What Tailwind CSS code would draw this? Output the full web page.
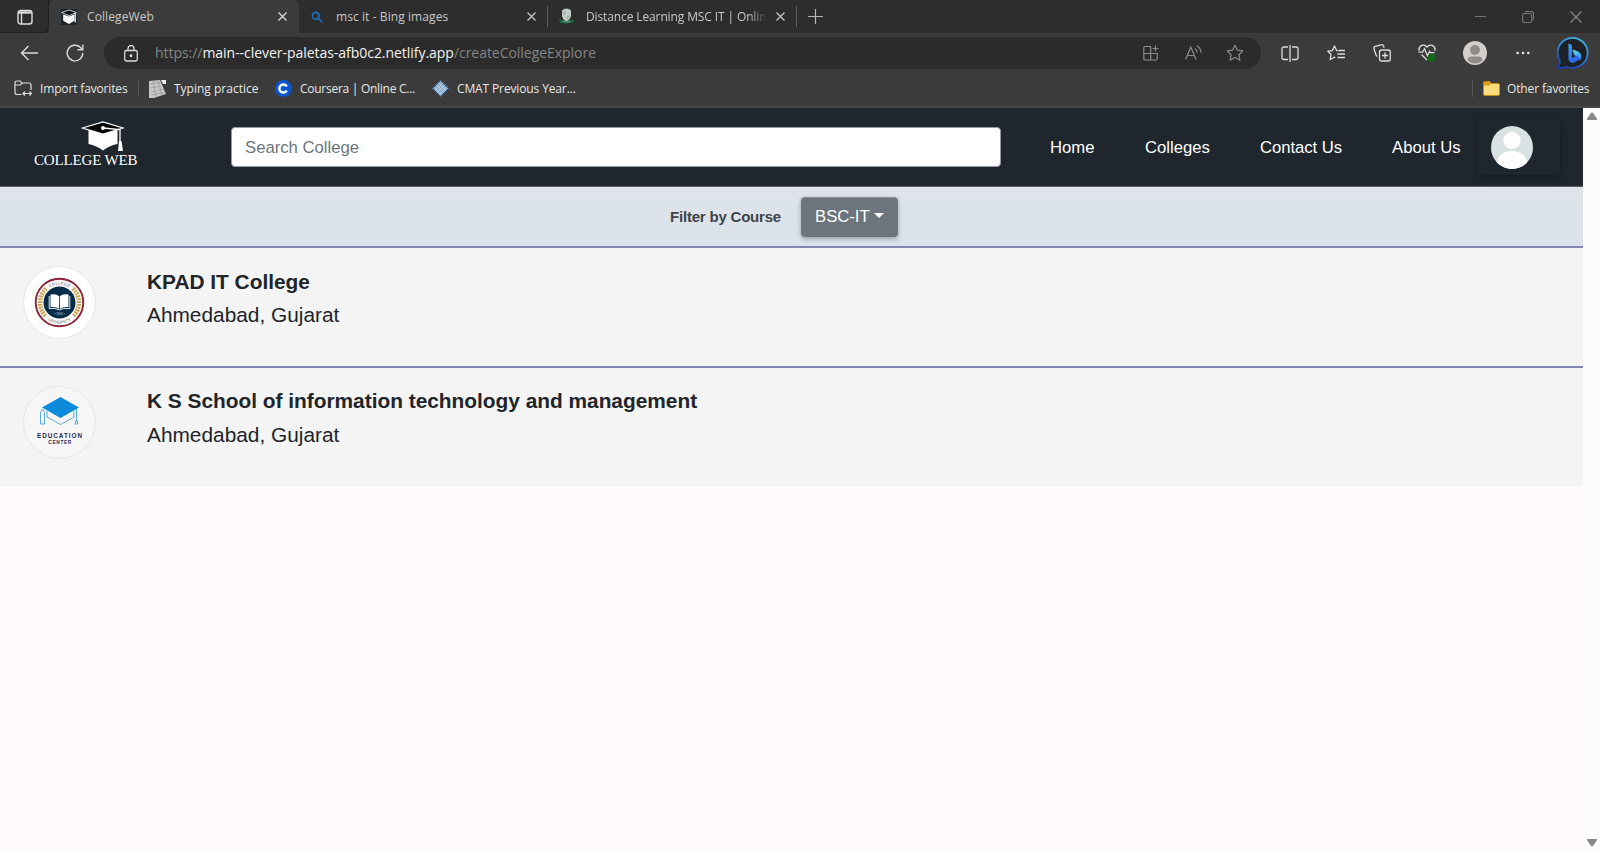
<!DOCTYPE html>
<html lang="en">
<head>
<meta charset="utf-8">
<title>CollegeWeb</title>
<script src="https://cdn.jsdelivr.net/npm/@tailwindcss/browser@4"></script>
</head>
<body class="h-[850px] w-[1600px] overflow-hidden bg-[#fffbfa] font-['Liberation_Sans',sans-serif]">
<div class="flex h-full flex-col">

  <!-- Browser chrome -->
  <header class="h-[108px] shrink-0 bg-[#3b3b3b] font-['Open_Sans',sans-serif] text-[#dedede]">
    <!-- Tab strip -->
    <div class="flex h-[33px] items-stretch bg-[#2d2d2d] text-[12px] leading-[33px] text-[#c8c8c8]">
      <div class="flex w-[49px] items-center rounded-br-md pl-[17px] shadow-[inset_-1px_-1px_1px_#202020]">
        <svg class="size-4" viewBox="0 0 16 16" fill="none" stroke="#dcdcdc" stroke-width="1.4"><rect x="1" y="1.500" width="14" height="13.500" rx="2.5"/><path d="M1.500 3.500h13" stroke-width="2.4"/><path d="M4.500 4v11"/></svg>
      </div>
      <div class="flex w-[250px] items-center rounded-t-md bg-[#3b3b3b] pl-3">
        <svg class="size-4" viewBox="0 0 16 16"><rect width="16" height="16" fill="#1d252c"/><path d="M2.2 5.5v6.2L8 15l5.4-3.3V5.500L8 7.500z" fill="#fff"/><path d="M.5 3.500 8 1l7.500 2.500L8 6.600z" fill="#111" stroke="#eee" stroke-width=".8"/><path d="M14.200 4v9.500" stroke="#fff" stroke-width="1.200"/></svg>
        <span class="ml-[10px] tracking-[0.1px] whitespace-nowrap">CollegeWeb</span>
        <svg class="mr-[12px] ml-auto size-[9px]" viewBox="0 0 9 9" stroke="#dcdcdc" stroke-width="1.200"><path d="M.5.500l8 8M8.500.500l-8 8"/></svg>
      </div>
      <div class="flex w-[248px] items-center pl-3">
        <svg class="size-3" viewBox="0 0 12 12" fill="none" stroke="#1a6fbd" stroke-width="1.700"><circle cx="4.800" cy="4.800" r="3.400"/><path d="M7.300 7.300l4 4"/></svg>
        <span class="ml-[13px] tracking-[0.08px] whitespace-nowrap">msc it - Bing images</span>
        <svg class="mr-[11px] ml-auto size-[9px]" viewBox="0 0 9 9" stroke="#c8c8c8" stroke-width="1.200"><path d="M.5.500l8 8M8.500.500l-8 8"/></svg>
      </div>
      <div class="my-[6px] w-px bg-[#5e5e5e]"></div>
      <div class="flex w-[248px] items-center pl-[10px]">
        <svg class="size-[17px]" viewBox="0 0 17 17"><path d="M4 2.500q4.500-4 9 0v5.500q-1 4-4.500 5.500Q5 12 4 8z" fill="#c3cdc7"/><path d="M5.500 4q1-1 2-1.200v4H5.200zM9 7.500h3Q11.500 11 9 12z" fill="#9db3a8"/><path d="M.8 11.200l3.400.800q4.300 2 8.600 0l3.400-.8-1.200 3.300-3 .5q-3.500 1.200-7 0l-3-.5z" fill="#176642"/><path d="M4.500 13.300q4 1.300 8 0" stroke="#9cbcac" stroke-width=".7" fill="none"/></svg>
        <span class="ml-[11px] w-[181px] overflow-hidden mask-r-from-[#000] mask-r-from-90% tracking-[-0.12px] whitespace-nowrap">Distance Learning MSC IT | Onlin</span>
        <svg class="ml-[9px] size-[9px]" viewBox="0 0 9 9" stroke="#c8c8c8" stroke-width="1.200"><path d="M.5.500l8 8M8.500.500l-8 8"/></svg>
      </div>
      <div class="my-[6px] w-px bg-[#5e5e5e]"></div>
      <svg class="mt-[9px] ml-[11px] size-[15px]" viewBox="0 0 15 15" stroke="#b8b8b8" stroke-width="1.200"><path d="M0 7.500h15M7.500 0v15"/></svg>
      <div class="mr-[18px] ml-auto flex items-center">
        <svg class="h-3 w-[11px]" viewBox="0 0 11 12" stroke="#777"><path d="M0 5.500h11"/></svg>
        <svg class="ml-9 size-3" viewBox="0 0 12 12" fill="none" stroke="#777" stroke-width="1.100"><rect x=".6" y="2.500" width="9" height="9" rx="1.500"/><path d="M3 1q.5-.5 1.500-.5h5q2 0 2 2v5q0 1-.8 1.600"/></svg>
        <svg class="ml-9 size-3" viewBox="0 0 12 12" stroke="#888" stroke-width="1.100"><path d="M.5.500l11 11M11.500.500l-11 11"/></svg>
      </div>
    </div>

    <!-- Address bar -->
    <div class="flex h-[40px] items-center">
      <svg class="ml-[20px] h-4 w-[18px]" viewBox="0 0 18 16" fill="none" stroke="#dcdcdc" stroke-width="1.400"><path d="M8.500 1L1.500 8l7 7M1.500 8H18"/></svg>
      <svg class="ml-[28px] size-[18px]" viewBox="0 0 18 18" fill="none" stroke="#dcdcdc" stroke-width="1.400"><path d="M16.800 9A7.800 7.800 0 1 1 14.500 3.500L16.500 5.500M16.800.500v5.300h-5.300"/></svg>
      <div class="ml-[20px] flex h-[32px] w-[1157px] items-center rounded-full bg-[#2b2b2b]">
        <svg class="ml-[20px] h-[17px] w-[14px]" viewBox="0 0 14 17" fill="none" stroke="#dcdcdc" stroke-width="1.300"><rect x=".7" y="5.500" width="12.600" height="10.500" rx="1.800"/><path d="M4 5.500V3.500a3 3 0 0 1 6 0v2"/><circle cx="7" cy="10.700" r=".8" fill="#dcdcdc"/></svg>
        <div class="ml-[17px] pb-px text-[14px] tracking-[-0.04px] whitespace-nowrap text-[#858585]"><span>https://</span><span class="text-[#f4f4f4]">main--clever-paletas-afb0c2.netlify.app</span><span>/createCollegeExplore</span></div>
        <svg class="ml-auto size-4" viewBox="0 0 16 16" fill="none" stroke="#8b8b8b" stroke-width="1.200"><path d="M8 1.500H2q-1.200 0-1.200 1.200v11.100Q.8 15 2 15h11q1.200 0 1.200-1.200V8.500H.8M7.700 1.500V15M12.500.500v6M9.500 3.500h6"/></svg>
        <svg class="ml-[26px] h-[16px] w-[17px]" viewBox="0 0 17 16" fill="none" stroke="#8b8b8b" stroke-width="1.200"><path d="M.6 14.500L5.800 2l5.200 12.500M2.400 10.500h6.800M10 3.500q2 1.500 2 4M12 .8q3.800 2.500 4 7"/></svg>
        <svg class="mr-[17px] ml-[24px] size-[18px]" viewBox="0 0 18 18" fill="none" stroke="#8b8b8b" stroke-width="1.200" stroke-linejoin="round"><path d="M9 1.200l2.400 5 5.500.7-4 3.800 1 5.500L9 13.500l-4.900 2.700 1-5.500-4-3.800 5.500-.7z"/></svg>
      </div>
      <svg class="ml-[20px] h-[17px] w-[18px]" viewBox="0 0 18 17" fill="none" stroke="#dcdcdc" stroke-width="1.300"><path d="M7 2H3Q1 2 1 4v8.500q0 2 2 2h4M11 2h4q2 0 2 2v8.500q0 2-2 2h-4M9 0v17"/></svg>
      <svg class="ml-[28px] h-[17px] w-[18px]" viewBox="0 0 18 17" fill="none" stroke="#dcdcdc" stroke-width="1.300" stroke-linejoin="round"><path d="M11 5.800l-1.400-.2L7.500 1 5.300 5.600.8 6.200l3.300 3.300-.9 5 4.300-2.300.8.300M11.500 5.500H18M10.500 9H18M10.500 12.500H18"/></svg>
      <svg class="ml-[28px] size-[18px]" viewBox="0 0 18 18" fill="none" stroke="#dcdcdc" stroke-width="1.300"><rect x="6.500" y="6" width="10.800" height="11" rx="2.200"/><path d="M12 8.500v6M9 11.500h6M4.300 12.500Q3.300 12 2.900 10.500L1 4.800Q.5 3 2.200 2.400L8 .8q2-.5 2.600 1.400l.5 1.600"/></svg>
      <svg class="ml-[27px] size-[18px]" viewBox="0 0 18 18" fill="none" stroke="#dcdcdc" stroke-width="1.300"><path d="M1 6.800C.5 1 6-.500 9 3c3-3.500 8.500-2 8 3.800M3.500 10.500L9 16M.5 8.200h4l2-3.500 3 7 2-4.200 1 1.200h4"/><circle cx="13.800" cy="13.800" r="4" fill="#13691a" stroke="none"/></svg>
      <svg class="ml-[27px] size-[24px]" viewBox="0 0 24 24"><circle cx="12" cy="12" r="12" fill="#d3cfcc"/><circle cx="12" cy="9" r="5" fill="#918c88"/><path d="M4.500 19Q5 15.500 8 15.500h8q3 0 3.500 3.500-3 3.500-7.500 3.500T4.500 19z" fill="#918c88"/></svg>
      <svg class="ml-[29px] h-1 w-[14px]" viewBox="0 0 14 4" fill="#e8e8e8"><circle cx="1.700" cy="2" r="1.300"/><circle cx="7" cy="2" r="1.300"/><circle cx="12.300" cy="2" r="1.300"/></svg>
      <svg class="ml-[27px] h-[34px] w-[33px]" viewBox="0 0 33 34"><defs><linearGradient id="ring" x1=".7" y1="0" x2=".3" y2="1"><stop stop-color="#3fb4de"/><stop offset=".5" stop-color="#2c7fdd"/><stop offset="1" stop-color="#1b3ba8"/></linearGradient><linearGradient id="bee" x1="0" y1="0" x2="1" y2="1"><stop stop-color="#3fa9f5"/><stop offset=".5" stop-color="#2a6fee"/><stop offset="1" stop-color="#2b62e0"/></linearGradient><linearGradient id="bowl" x1="0" y1="0" x2="0" y2="1"><stop stop-color="#5fe3ee"/><stop offset="1" stop-color="#2a6fee"/></linearGradient></defs><path d="M1.200 32.500L3 25A15 15 0 1 1 10.500 31z" fill="#1e2227" stroke="url(#ring)" stroke-width="1.800" stroke-linejoin="round"/><path d="M15.500 13.500Q22 15 24 18.500q1 4-1.500 6L20 20.500l-3-1.500z" fill="url(#bowl)"/><path d="M11.500 7.500q3.500.8 3.500 3V22l5-2.500 3 3.500-5.500 3.500q-2 1-4-.5-2-1.200-2-3z" fill="url(#bee)"/></svg>
    </div>

    <!-- Favorites bar -->
    <div class="flex h-[32px] items-center pb-px text-[12px] text-[#e8e8e8]">
      <svg class="ml-[14px] h-[17px] w-[18px]" viewBox="0 0 18 17" fill="none" stroke="#dcdcdc" stroke-width="1.200"><path d="M7.500 14.500H3Q1 14.500 1 12.500V3Q1 1 3 1h3l2 2h7q2 0 2 2v5M1 5h5.500L8.500 3M9 13.500h8.500M11 11.500l-2 2 2 2M15.500 11.500l2 2-2 2"/></svg>
      <span class="ml-[8px] w-[87px] tracking-[-0.15px] whitespace-nowrap">Import favorites</span>
      <div class="ml-[11px] h-4 w-px bg-[#585858]"></div>
      <svg class="ml-[10px] h-[18px] w-[17px]" viewBox="0 0 17 18"><path d="M0 1l11-1 6 14-12 4H0z" fill="#c7c7c7"/><path d="M12 0h5v4h-3z" fill="#ececec"/><path d="M1 4l10-1.500M1 8l12-2M2 12l13-3M3 15l13-3M4 1l3 16M9 1l4 14" stroke="#858585" stroke-width=".5"/></svg>
      <span class="ml-[8px] w-[84px] whitespace-nowrap">Typing practice</span>
      <svg class="ml-[17px] size-[17px]" viewBox="0 0 17 17"><circle cx="8.500" cy="8.500" r="8.500" fill="#0b55d0"/><path d="M11.800 6.400A4 4 0 1 0 11.800 10.600" fill="none" stroke="#fff" stroke-width="2.400"/></svg>
      <span class="ml-[8px] w-[116px] tracking-[-0.27px] whitespace-nowrap">Coursera | Online C...</span>
      <svg class="ml-[16px] size-[17px]" viewBox="0 0 17 17"><path d="M8.500 0L17 8.500 8.500 17 0 8.500z" fill="#86a9ca"/><path d="M6 2.500l8.500 8.500M4 4.500l8.500 8.500M2 6.500l8.500 8.500M11 2.500L2.500 11M13 4.500L4.500 13M15 6.500L6.500 15" stroke="#cfdae4" stroke-width=".8"/><path d="M8.500.500L16.500 8.500 8.500 16.500.500 8.500z" fill="none" stroke="#2b5580" stroke-width="1"/></svg>
      <span class="ml-[8px] tracking-[-0.13px] whitespace-nowrap">CMAT Previous Year...</span>
      <div class="ml-auto h-4 w-px bg-[#585858]"></div>
      <svg class="ml-[10px] h-[15px] w-[17px]" viewBox="0 0 17 15"><path d="M.5 13V2Q.5.500 2 .5h4.500l2 2H15q1.500 0 1.500 1.500v9q0 1.500-1.500 1.500H2Q.5 14.500.500 13z" fill="#fddc7b" stroke="#c18f12"/><path d="M1 4.500V1h5.500l1.500 1.500-1.500 2z" fill="#d7a01b"/></svg>
      <span class="mr-[10px] ml-[7px] w-[83px] tracking-[-0.13px] whitespace-nowrap">Other favorites</span>
    </div>
    <div class="mt-px h-[2px] bg-[#44474b]"></div>
  </header>

  <!-- Viewport -->
  <div class="flex min-h-0 flex-1">
    <main class="w-[1583px] text-[#212529]">
      <nav class="flex h-[79px] items-center border-b border-b-[#5a5e65] bg-[#20262e] text-[16.700px] text-white">
        <div class="ml-[34px] w-[104px] shrink-0 pb-[4px]">
          <svg class="ml-[47px] h-[31px] w-[44px]" viewBox="0 0 44 31"><path d="M7.500 9v14q8 1.500 14.500 6.500Q28 24.500 36.500 23V9L22 13z" fill="#fff"/><path d="M1.500 7L22 1l20 6-20 6z" fill="#050505" stroke="#fff" stroke-width="1.300"/><circle cx="22" cy="7" r="2" fill="#fff"/><path d="M22 7l17 1.500V22" fill="none" stroke="#fff" stroke-width="1.300"/><path d="M38 20h2.500l1.500 10h-5z" fill="#fff"/></svg>
          <div class="h-[17px] font-['Liberation_Serif',serif] text-[15px] leading-[17px] tracking-[-0.16px] whitespace-nowrap">COLLEGE WEB</div>
        </div>
        <div class="ml-[93px] flex h-[40px] w-[770px] shrink-0 items-center rounded-[4px] border border-[#929b9e] bg-white pt-px pl-[13px] text-[#6c757d]">Search College</div>
        <a class="ml-[49px] w-[45px] pt-px whitespace-nowrap">Home</a>
        <a class="ml-[50px] w-[65px] pt-px whitespace-nowrap">Colleges</a>
        <a class="ml-[50px] w-[83px] pt-px tracking-[-0.06px] whitespace-nowrap">Contact Us</a>
        <a class="ml-[49px] w-[69px] pt-px whitespace-nowrap">About Us</a>
        <div class="mr-[23px] ml-auto flex h-[56px] w-[82px] items-center rounded-[4px] bg-[#20262e] pl-[13px] shadow-[0_2px_7px_rgba(0,0,0,0.3)]">
          <svg class="h-[43px] w-[42px]" viewBox="0 0 42 43"><defs><clipPath id="face"><ellipse cx="21" cy="21.500" rx="21" ry="21.500"/></clipPath></defs><g clip-path="url(#face)"><rect width="42" height="43" fill="#dae1e2"/><ellipse cx="21" cy="14.500" rx="8.700" ry="8.500" fill="#fff"/><path d="M5 38q3-13 16-13t16 13l-8 7H13z" fill="#fff"/></g></svg>
        </div>
      </nav>

      <section class="flex h-[59px] items-center bg-linear-to-b from-[#dfe4eb] to-[#dbe2e9]">
        <span class="ml-[670px] w-[111px] pt-px text-[15px] font-bold tracking-[-0.2px] whitespace-nowrap text-[#40444a]">Filter by Course</span>
        <button class="ml-[20px] flex h-[40px] w-[97px] items-center rounded-[4px] border-t border-[#8b9197] bg-[#6c757d] pl-[14px] text-[16.700px] text-white shadow-[0_2px_5px_rgba(0,0,0,0.3)]">
          <span class="w-[54px] whitespace-nowrap">BSC-IT</span>
          <svg class="mb-[3px] ml-[5px] h-[5px] w-[10px]" viewBox="0 0 10 5" fill="#fff"><path d="M0 0h10L5 5z"/></svg>
        </button>
      </section>

      <article class="flex h-[120px] border-t-2 border-[#8585b5] bg-[#f4f4f4] pl-[23px]">
        <svg class="mt-[18px] size-[73px]" viewBox="0 0 73 73"><defs><path id="top" d="M18.500 36.500a18 18 0 0 1 36 0"/><path id="bottom" d="M15.500 36.500a21 21 0 0 0 42 0"/></defs><circle cx="36.500" cy="36.500" r="36" fill="#fff" stroke="#e3e6e8"/><g><circle cx="36.500" cy="36.500" r="23.800" fill="#fff" stroke="#8c2338" stroke-width="1.900"/><path d="M23 22.500a19.500 19.500 0 0 0 0 28M50 22.500a19.500 19.500 0 0 1 0 28" fill="none" stroke="#cfa958" stroke-width="4.500" stroke-dasharray="2 .8"/><circle cx="36.500" cy="36.500" r="16" fill="#052d49"/><path d="M27.500 28.500q6-1 8.600 1.800v12.500q-3-2.300-8.600-1.800zM45.500 28.500q-6-1-8.600 1.800v12.500q3-2.300 8.600-1.800z" fill="#fff"/><path d="M26.200 30v12.500q6.500-.500 10.300 1.300 3.500-1.800 10.300-1.300V30" fill="none" stroke="#fff" stroke-width=".9"/></g><g font-size="4" fill="#555" text-anchor="middle"><text letter-spacing=".3"><textPath href="#top" startOffset="50%">COLLEGE</textPath></text><text><textPath href="#bottom" startOffset="50%">UNIVERSITY</textPath></text></g><text x="36.500" y="49" font-size="3" text-anchor="middle" fill="#cdd7de">• 1950 •</text></svg>
        <div class="ml-[51px] pt-[17px] text-[20.850px]">
          <h2 class="h-[33px] leading-[33px] font-bold whitespace-nowrap">KPAD IT College</h2>
          <p class="h-[33px] leading-[33px] whitespace-nowrap">Ahmedabad, Gujarat</p>
        </div>
      </article>

      <article class="flex h-[120px] border-t-2 border-[#8585b5] bg-[#f4f4f4] pl-[23px]">
        <svg class="mt-[18px] size-[73px]" viewBox="0 0 73 73"><circle cx="36.500" cy="36.500" r="36" fill="#f7f6f6" stroke="#e5e5e7"/><path d="M37.500 11L56 21.500 37.500 32 19 21.500z" fill="#0b8bd9"/><path d="M24 25v6l13.500 7.500L51 31v-6M17.500 38V26.500l2-3.500 2 3.500V38zM53.500 23v13M52 38l1-3.500h1l1 3.500z" fill="none" stroke="#46a3dc" stroke-width=".9"/><g font-weight="bold" fill="#292d54" text-anchor="middle"><text x="36.500" y="52" font-size="6.300" textLength="45">EDUCATION</text><text x="36.800" y="58" font-size="4.800" textLength="23">CENTER</text></g></svg>
        <div class="ml-[51px] pt-[16px] text-[20.850px]">
          <h2 class="h-[34px] leading-[33px] font-bold whitespace-nowrap">K S School of information technology and management</h2>
          <p class="h-[33px] leading-[33px] whitespace-nowrap">Ahmedabad, Gujarat</p>
        </div>
      </article>
    </main>

    <!-- Scrollbar -->
    <aside class="flex flex-1 flex-col items-center justify-between bg-[#fcfcfd] pt-[4px] pb-[3px]">
      <svg class="h-[8px] w-[10px]" viewBox="0 0 10 8" fill="#8a8a8a"><path d="M0 7L4 .8h2L10 7v1H0z"/></svg>
      <svg class="h-[8px] w-[10px]" viewBox="0 0 10 8" fill="#8a8a8a"><path d="M0 1V0h10v1L6 7.200H4z"/></svg>
    </aside>
  </div>
</div>
</body>
</html>
